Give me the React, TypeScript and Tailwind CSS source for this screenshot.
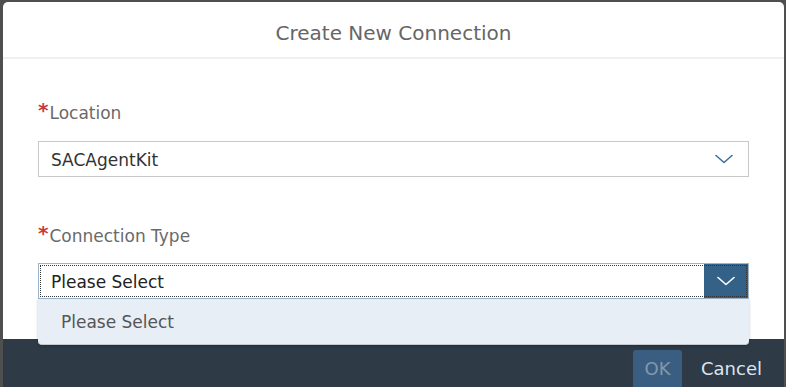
import React from "react";

const Chevron = ({ color }: { color: string }) => (
  <svg width="18" height="10" viewBox="0 0 18 10" fill="none">
    <path d="M1 1.5 L9 8.5 L17 1.5" stroke={color} strokeWidth="1.6" strokeLinecap="round" strokeLinejoin="round" />
  </svg>
);

const Label = ({ text }: { text: string }) => (
  <div className="flex items-start h-[20px] leading-[20px] pt-[1px]">
    <span className="text-[#c83a3a] text-[20px] font-bold leading-[14px] mr-[1px]">*</span>
    <span className="text-[17px] text-[#6a6a6a]">{text}</span>
  </div>
);

export default function App() {
  return (
    <div
      className="w-[786px] h-[387px] bg-[#4f4f4f] pt-[2px] pl-[3px] pr-[2px] overflow-hidden"
      style={{ fontFamily: '"DejaVu Sans", "Noto Sans", sans-serif' }}
    >
      <div className="relative bg-white rounded-t-[5px] h-[385px] flex flex-col">
        <div className="h-[57px] pt-[6px] flex items-center justify-center border-b-2 border-[#f0f0f0] text-[20px] text-[#666]">
          Create New Connection
        </div>
        <div className="flex-1 px-[35px] pt-[43px]">
          <Label text="Location" />
          <div className="mt-[19px] h-[36px] border border-[#c8c8c8] flex items-center justify-between pl-[12px] pr-[15px]">
            <span className="text-[17px] text-[#333] pt-[3px]">SACAgentKit</span>
            <Chevron color="#3f6f9c" />
          </div>
          <div className="mt-[48px]">
            <Label text="Connection Type" />
          </div>
          <div className="relative mt-[18px]">
            <div className="h-[36px] border border-[#9db6cf] flex items-stretch outline-dotted outline-1 outline-offset-[-3px] outline-[#333]">
              <div className="flex-1 flex items-center pl-[12px] pt-[3px] text-[17px] text-[#222]">Please Select</div>
              <div className="w-[44px] bg-[#346187] flex items-center justify-center">
                <Chevron color="#ffffff" />
              </div>
            </div>
            <div className="absolute left-0 right-0 top-[36px] z-10 h-[46px] bg-[#e8eef6] rounded-b-[4px] border-b border-[#c4c9cf] shadow-[0_1px_3px_rgba(0,0,0,0.25)] flex items-center pl-[23px] pt-[3px] text-[17px] text-[#555]">
              Please Select
            </div>
          </div>
        </div>
        <div className="h-[48px] bg-[#2e3a46] flex items-end justify-end pr-[22px] gap-[19px]">
          <div className="w-[49px] h-[37px] bg-[#3a5e81] rounded-t-[3px] flex items-center justify-center text-[18px] text-[#8298ad]">
            OK
          </div>
          <div className="h-[37px] flex items-center text-[18px] text-[#d9e4ef]">Cancel</div>
        </div>
      </div>
    </div>
  );
}
